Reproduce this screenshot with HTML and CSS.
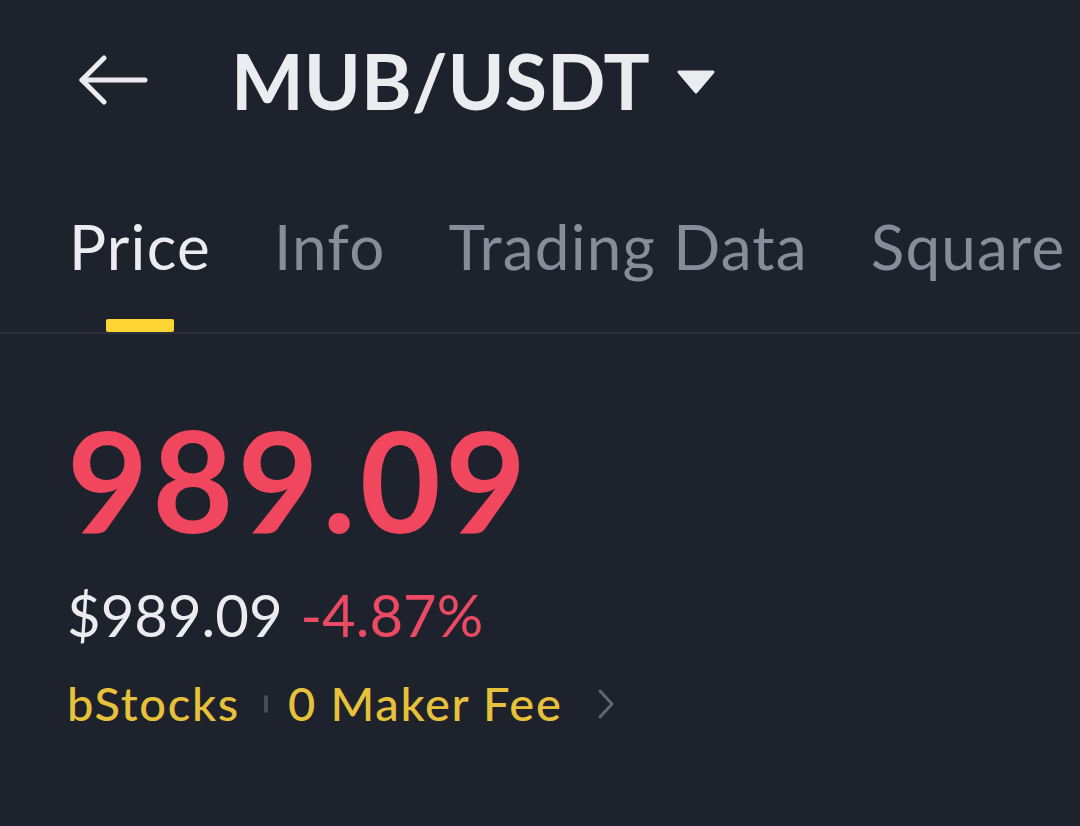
FILE: index.html
```html
<!DOCTYPE html>
<html lang="en">
<head>
    <meta charset="UTF-8">
    <meta name="viewport" content="width=device-width, initial-scale=1.0">
    <title>MUB/USDT</title>
    <link rel="stylesheet" href="styles.css">
</head>
<body>
    <!-- Top bar -->
    <div class="top-bar">
        <svg class="back-icon" width="70" height="50" viewBox="0 0 70 50" fill="none" stroke="#eaecef" stroke-width="5" stroke-linecap="round" stroke-linejoin="round">
            <path d="M67 25H4"/>
            <path d="M26 3L4 25l22 22"/>
        </svg>
        <div class="pair">MUB/USDT</div>
        <svg class="pair-caret" width="38" height="24" viewBox="0 0 38 24">
            <path d="M2 2h34L19 22z" fill="#eaecef" stroke="#eaecef" stroke-width="3" stroke-linejoin="round"/>
        </svg>
    </div>

    <!-- Tabs -->
    <div class="tabs">
        <div class="tab active">
            <span class="tab-label">Price</span>
            <span class="tab-bar"></span>
        </div>
        <div class="tab">
            <span class="tab-label">Info</span>
            <span class="tab-bar"></span>
        </div>
        <div class="tab">
            <span class="tab-label">Trading Data</span>
            <span class="tab-bar"></span>
        </div>
        <div class="tab">
            <span class="tab-label">Square</span>
            <span class="tab-bar"></span>
        </div>
    </div>

    <!-- Price block -->
    <div class="price-block">
        <div class="last-price">989.09</div>
        <div class="price-sub">
            <span class="usd-price">$989.09</span>
            <span class="change">-4.87%</span>
        </div>
        <div class="tags">
            <span class="tag">bStocks</span>
            <span class="tag-sep"></span>
            <span class="tag">0 Maker Fee</span>
            <svg class="tag-arrow" width="18" height="32" viewBox="0 0 18 32" fill="none" stroke="#5e6673" stroke-width="3" stroke-linecap="round" stroke-linejoin="round">
                <path d="M3 3l12 13L3 29"/>
            </svg>
        </div>
    </div>
</body>
</html>
```

FILE: styles.css
```css
* {
    box-sizing: border-box;
    margin: 0;
    padding: 0;
}

body {
    font-family: Lato, "Open Sans", sans-serif;
    background-color: #1e222d;
    color: #eaecef;
    width: 1080px;
    height: 826px;
    overflow: hidden;
}

/* Top bar */
.top-bar {
    display: flex;
    align-items: center;
    height: 160px;
    padding-left: 78px;
}

.back-icon {
    flex: 0 0 70px;
}

.pair {
    margin-left: 83px;
    font-size: 77px;
    font-weight: bold;
    line-height: 1;
    color: #eaecef;
}

.pair-caret {
    margin-left: 27px;
    margin-top: 4px;
}

/* Tabs */
.tabs {
    display: flex;
    gap: 63px;
    padding: 55px 0 0 69px;
    border-bottom: 2px solid #2b303b;
    white-space: nowrap;
    overflow: hidden;
}

.tab {
    display: flex;
    flex-direction: column;
    align-items: center;
}

.tab-label {
    font-size: 62px;
    line-height: 1;
    letter-spacing: 1.2px;
    color: #868c98;
}

.tab.active .tab-label {
    color: #eaecef;
}

.tab-bar {
    width: 68px;
    height: 13px;
    margin-top: 42px;
    border-radius: 2px;
}

.tab.active .tab-bar {
    background: #fcd535;
}

/* Price block */
.price-block {
    padding: 75px 0 0 67px;
}

.last-price {
    font-size: 140px;
    font-weight: bold;
    line-height: 1;
    letter-spacing: 4px;
    color: #f0475e;
}

.price-sub {
    display: flex;
    gap: 18px;
    margin-top: 37px;
    font-size: 58px;
    line-height: 1;
}

.usd-price {
    color: #eaecef;
}

.change {
    color: #ec4a63;
}

.tags {
    display: flex;
    align-items: center;
    margin-top: 36px;
    font-size: 47px;
    font-weight: 500;
    line-height: 1;
    letter-spacing: 1.7px;
    color: #e8c13a;
}

.tag-sep {
    width: 4px;
    height: 18px;
    margin: 0 20px 0 24px;
    background: #474d57;
    border-radius: 2px;
}

.tag-arrow {
    margin-left: 34px;
}
```
